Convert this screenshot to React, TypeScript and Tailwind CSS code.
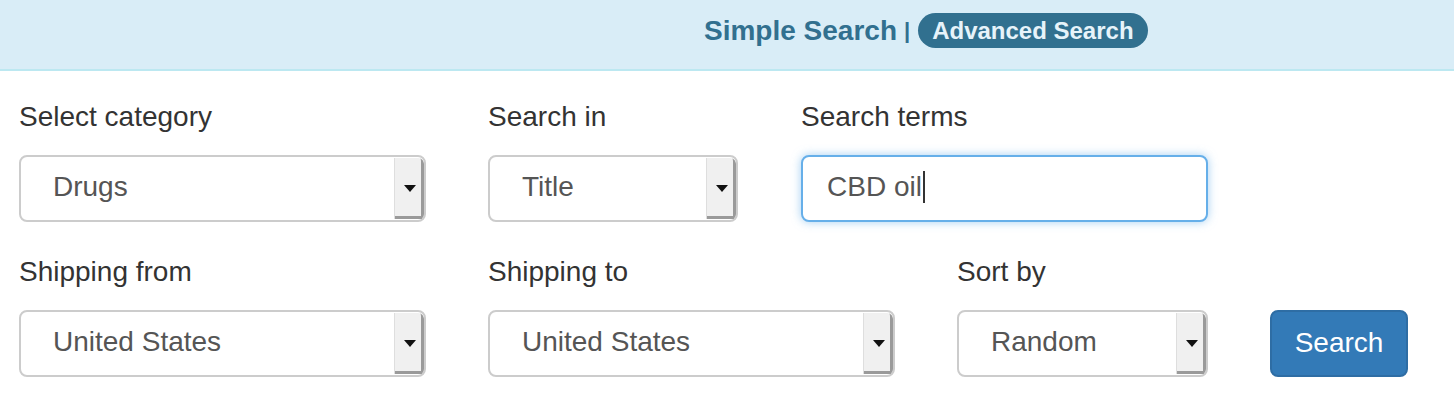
import React from 'react';

const Caret: React.FC = () => (
  <svg width="12" height="7" viewBox="0 0 12 7" className="block">
    <path d="M0 0h12L6 7z" fill="#111" />
  </svg>
);

const FakeSelect: React.FC<{ value: string, width: string }> = ({ value, width }) => (
  <div className={`${width} h-[67px] flex rounded-[8px] border-2 border-[#cccccc] bg-white overflow-hidden`}>
    <div className="flex-1 flex items-center pl-[32px] pb-[3px] text-[28px] text-[#555555]">{value}</div>
    <div className="w-[30px] my-[1px] mr-0 flex items-center justify-center bg-[#f0f0f0] border-l border-[#dedede] rounded-tr-[6px] shadow-[inset_-3px_-3px_0_#9a9a9a]">
      <Caret />
    </div>
  </div>
);

const Field: React.FC<{ label: string, children: React.ReactNode }> = ({ label, children }) => (
  <div className="flex flex-col">
    <label className="h-[40px] leading-[40px] text-[28px] text-[#333333]">{label}</label>
    <div className="mt-[18px]">{children}</div>
  </div>
);

export default function App() {
  return (
    <div className="w-[1454px] h-[412px] bg-white font-['Liberation_Sans',Arial,sans-serif] overflow-hidden">
      <div className="h-[71px] bg-[#d9edf7] border-b-2 border-[#bce8f1] flex items-start pt-[13px] pl-[704px]">
        <div className="flex items-center h-[35px]">
          <span className="text-[28px] font-bold text-[#31708f] leading-none">Simple Search</span>
          <span className="ml-[7px] mr-[8px] text-[22px] font-bold text-[#31708f] leading-none">|</span>
          <span className="h-[35px] px-[14px] rounded-full bg-[#31708f] text-[#e6f3fa] text-[24px] font-bold flex items-center">Advanced Search</span>
        </div>
      </div>

      <div className="pl-[19px] pt-[26px]">
        <div className="flex gap-[62px]">
          <Field label="Select category">
            <FakeSelect value="Drugs" width="w-[407px]" />
          </Field>
          <Field label="Search in">
            <FakeSelect value="Title" width="w-[250px]" />
          </Field>
          <div className="ml-[1px]">
            <Field label="Search terms">
              <div className="w-[407px] h-[67px] rounded-[8px] border-2 border-[#66afe9] bg-white flex items-center pl-[24px] pb-[3px] text-[28px] text-[#555555] shadow-[0_0_10px_rgba(102,175,233,0.6)]">
                CBD oil
                <span className="ml-[1px] w-[2px] h-[32px] bg-[#333333]" />
              </div>
            </Field>
          </div>
        </div>

        <div className="flex gap-[62px] mt-[30px]">
          <Field label="Shipping from">
            <FakeSelect value="United States" width="w-[407px]" />
          </Field>
          <Field label="Shipping to">
            <FakeSelect value="United States" width="w-[407px]" />
          </Field>
          <Field label="Sort by">
            <FakeSelect value="Random" width="w-[251px]" />
          </Field>
          <div className="flex flex-col">
            <div className="h-[40px]" />
            <button className="mt-[18px] w-[138px] h-[67px] rounded-[8px] bg-[#337ab7] border-2 border-[#2e6da4] text-white text-[28px] pb-[2px]">
              Search
            </button>
          </div>
        </div>
      </div>
    </div>
  );
}
